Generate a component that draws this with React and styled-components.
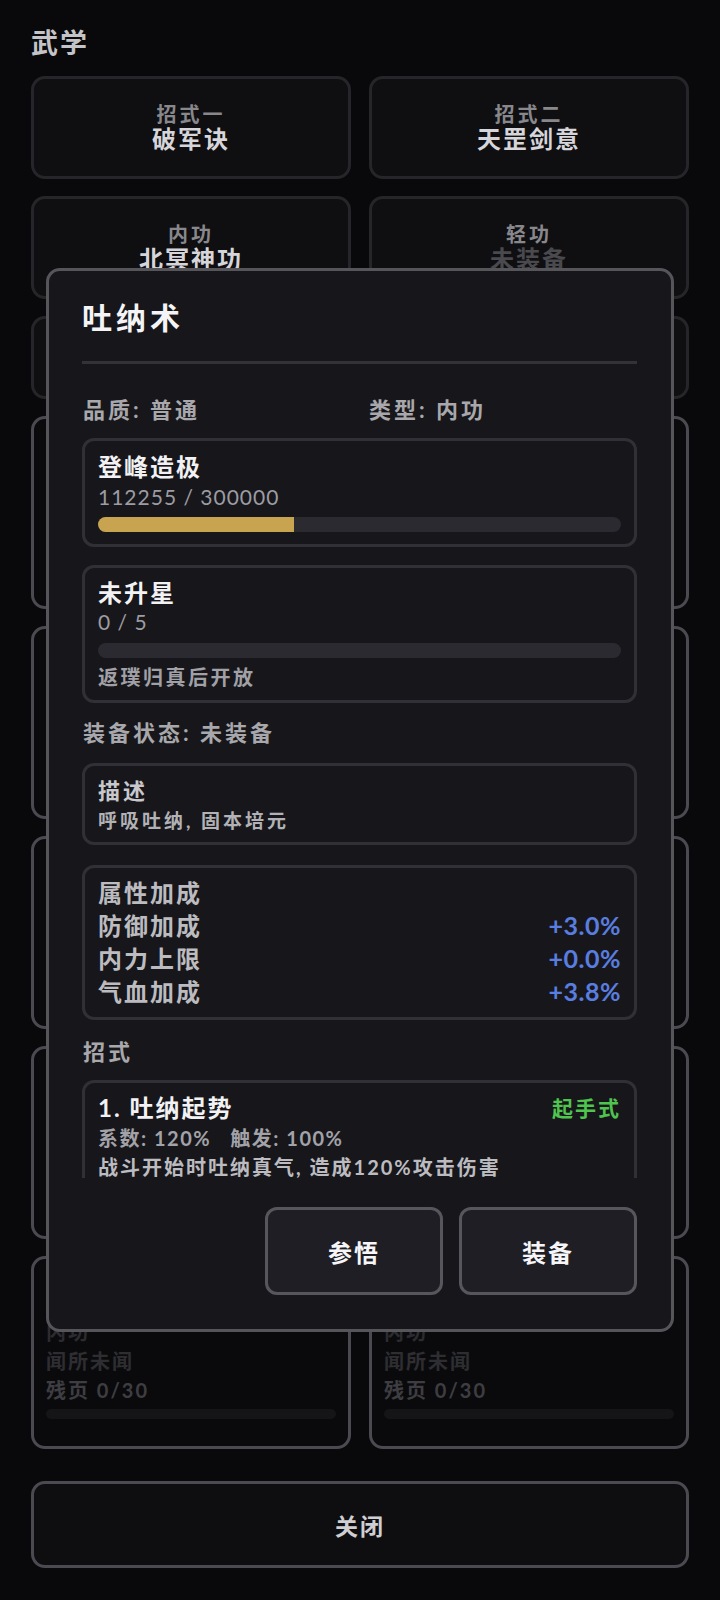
import React from 'react'
import styled, { createGlobalStyle } from 'styled-components'

const GlobalStyle = createGlobalStyle`
  html, body {
    margin: 0;
    padding: 0;
    background: #09090b;
  }
  body {
    font-family: "Lato", "Noto Sans CJK SC", sans-serif;
    color: #d8d8dc;
  }
  * {
    box-sizing: border-box;
  }
`

const Page = styled.div`
  padding: 25px 31px 32px;
  min-height: 1600px;
`

const PageTitle = styled.div`
  font-size: 27px;
  line-height: 36px;
  font-weight: 700;
  color: #c4c4c8;
  letter-spacing: 2px;
  margin-bottom: 15px;
`

const Grid = styled.div`
  display: grid;
  grid-template-columns: 1fr 1fr;
  gap: 17px 18px;
`

const SlotCard = styled.div`
  height: ${p => (p.short ? 83 : 103)}px;
  background: #0f0f12;
  border: 3px solid #26262a;
  border-radius: 14px;
  display: flex;
  flex-direction: column;
  align-items: center;
  justify-content: center;
`

const SlotLabel = styled.div`
  font-size: 20px;
  line-height: 22px;
  font-weight: 700;
  color: #88888c;
  letter-spacing: 3px;
`

const SlotName = styled.div`
  font-size: 24px;
  line-height: 28px;
  font-weight: 700;
  color: ${p => (p.empty ? '#4a4a4e' : '#d6d6da')};
  letter-spacing: 2px;
`

const ListCard = styled.div`
  height: 193px;
  background: #0a0a0c;
  border: 3px solid #4a4a50;
  border-radius: 14px;
  padding: 12px 12px;
  display: flex;
  flex-direction: column;
`

const ListName = styled.div`
  font-size: 22px;
  line-height: 34px;
  font-weight: 700;
  color: #3a3a3e;
  margin-bottom: 13px;
`

const ListLine = styled.div`
  font-size: 20px;
  line-height: 29px;
  font-weight: 700;
  letter-spacing: 2px;
  color: ${p => p.color || '#2e2e32'};
`

const ListBar = styled.div`
  margin-top: 4px;
  height: 10px;
  border-radius: 5px;
  background: #151518;
`

const CloseButton = styled.div`
  margin-top: 32px;
  height: 87px;
  background: #0e0e11;
  border: 3px solid #4a4a50;
  border-radius: 14px;
  display: flex;
  align-items: center;
  justify-content: center;
  font-size: 23px;
  font-weight: 700;
  color: #cfcfd3;
  letter-spacing: 2px;
`

const Overlay = styled.div`
  position: fixed;
  inset: 0;
  display: flex;
  align-items: center;
  justify-content: center;
`

const Modal = styled.div`
  width: 628px;
  background: #17171b;
  border: 3px solid #55555a;
  border-radius: 14px;
  padding: 26px 34px 34px 33px;
  display: flex;
  flex-direction: column;
`

const ModalTitle = styled.div`
  font-size: 30px;
  line-height: 40px;
  font-weight: 700;
  color: #f4f4f6;
  letter-spacing: 4px;
`

const Divider = styled.div`
  margin: 24px 0 16px;
  height: 3px;
  background: #323237;
`

const Scroll = styled.div`
  height: 798px;
  overflow: hidden;
  display: flex;
  flex-direction: column;
`

const InfoRow = styled.div`
  margin-top: 14px;
  display: grid;
  grid-template-columns: 1fr 1fr;
  gap: 18px;
  padding-left: 1px;
  font-size: 22px;
  line-height: 32px;
  font-weight: 700;
  color: #a8a8ac;
  letter-spacing: 3px;
`

const Box = styled.div`
  margin-top: ${p => p.gap || 0}px;
  border: 3px solid #303036;
  border-radius: 12px;
  padding: ${p => p.pad || '10px 13px'};
  flex-shrink: 0;
`

const BoxName = styled.div`
  font-size: 24px;
  line-height: ${p => p.lh || 32}px;
  font-weight: 700;
  color: #f2f2f4;
  letter-spacing: 2px;
`

const BoxValue = styled.div`
  font-size: 21px;
  line-height: 28px;
  color: #9c9ca2;
  letter-spacing: 1px;
`

const Track = styled.div`
  margin-top: ${p => p.gap || 6}px;
  height: 15px;
  border-radius: 8px;
  background: #2a2a30;
  overflow: hidden;
`

const Fill = styled.div`
  height: 100%;
  background: #c9a450;
`

const Note = styled.div`
  margin-top: 6px;
  font-size: 20px;
  line-height: 26px;
  font-weight: 700;
  color: #a0a0a6;
  letter-spacing: 2.5px;
`

const Label = styled.div`
  margin-top: ${p => p.gap || 0}px;
  padding-left: 1px;
  font-size: 22px;
  line-height: ${p => p.lh || 32}px;
  font-weight: 700;
  color: #a8a8ac;
  letter-spacing: 3px;
`

const DescTitle = styled.div`
  font-size: 22px;
  line-height: 30px;
  font-weight: 700;
  color: #c8c8cc;
  letter-spacing: 3px;
`

const DescText = styled.div`
  font-size: 19px;
  line-height: 30px;
  font-weight: 700;
  color: #b2b2b6;
  letter-spacing: 3px;
`

const StatRow = styled.div`
  display: flex;
  justify-content: space-between;
  align-items: center;
  height: 33px;
  line-height: 33px;
  font-size: 24px;
  font-weight: 700;
  letter-spacing: 2px;
  color: #bcbcc0;
`

const StatValue = styled.span`
  font-size: 25px;
  font-weight: 700;
  letter-spacing: 0.5px;
  color: #5a7de0;
`

const MoveHead = styled.div`
  display: flex;
  justify-content: space-between;
  align-items: center;
  height: 30px;
  line-height: 30px;
`

const MoveTag = styled.span`
  font-size: 21px;
  font-weight: 700;
  color: #4fc44f;
  letter-spacing: 2px;
`

const MoveStats = styled.div`
  font-size: 20px;
  line-height: 30px;
  font-weight: 700;
  color: #a2a2a8;
  letter-spacing: 1.5px;
  white-space: pre;
`

const MoveDesc = styled.div`
  font-size: 20px;
  line-height: 28px;
  font-weight: 700;
  color: #bcbcc0;
  letter-spacing: 2px;
  white-space: nowrap;
`

const Actions = styled.div`
  margin-top: 29px;
  display: flex;
  justify-content: flex-end;
  gap: 16px;
`

const ActionButton = styled.div`
  width: 178px;
  height: 88px;
  background: #1e1e24;
  border: 3px solid #56565c;
  border-radius: 12px;
  display: flex;
  align-items: center;
  justify-content: center;
  font-size: 24px;
  font-weight: 700;
  color: #f6f6f8;
  letter-spacing: 2px;
`

const slots = [
  { label: '招式一', name: '破军诀' },
  { label: '招式二', name: '天罡剑意' },
  { label: '内功', name: '北冥神功' },
  { label: '轻功', name: '未装备', empty: true },
  { label: '心法', name: '未装备', empty: true, short: true },
  { label: '身法', name: '未装备', empty: true, short: true },
]

const arts = [
  { name: '破军诀', type: '招式', grade: '绝世' },
  { name: '天罡剑意', type: '招式', grade: '上乘' },
  { name: '北冥神功', type: '内功', grade: '绝世' },
  { name: '吐纳术', type: '内功', grade: '普通' },
  { name: '凌波微步', type: '轻功', grade: '上乘' },
  { name: '金刚诀', type: '内功', grade: '精良' },
  { name: '落英掌', type: '招式', grade: '精良' },
  { name: '梯云纵', type: '轻功', grade: '普通' },
  { name: '易筋经', type: '内功', grade: '闻所未闻' },
  { name: '洗髓经', type: '内功', grade: '闻所未闻' },
]

const stats = [
  { name: '防御加成', value: '+3.0%' },
  { name: '内力上限', value: '+0.0%' },
  { name: '气血加成', value: '+3.8%' },
]

export default function App () {
  const exp = 112255
  const expMax = 300000

  return (
    <>
      <GlobalStyle />
      <Page>
        <PageTitle>武学</PageTitle>
        <Grid>
          {slots.map(s => (
            <SlotCard key={s.label} short={s.short}>
              <SlotLabel>{s.label}</SlotLabel>
              <SlotName empty={s.empty}>{s.name}</SlotName>
            </SlotCard>
          ))}
          {arts.map(a => (
            <ListCard key={a.name}>
              <ListName>{a.name}</ListName>
              <ListLine color="#2c2c30">{a.type}</ListLine>
              <ListLine>{a.grade}</ListLine>
              <ListLine color="#3e3e42">残页 0/30</ListLine>
              <ListBar />
            </ListCard>
          ))}
        </Grid>
        <CloseButton>关闭</CloseButton>
      </Page>

      <Overlay>
        <Modal>
          <ModalTitle>吐纳术</ModalTitle>
          <Divider />
          <Scroll>
            <InfoRow>
              <span>品质: 普通</span>
              <span>类型: 内功</span>
            </InfoRow>

            <Box gap={12} pad="10px 13px 12px">
              <BoxName>登峰造极</BoxName>
              <BoxValue>112255 / 300000</BoxValue>
              <Track>
                <Fill style={{ width: `${(exp / expMax) * 100}%` }} />
              </Track>
            </Box>

            <Box gap={18} pad="10px 13px 10px">
              <BoxName lh={30}>未升星</BoxName>
              <BoxValue>0 / 5</BoxValue>
              <Track gap={7} />
              <Note>返璞归真后开放</Note>
            </Box>

            <Label gap={14}>装备状态: 未装备</Label>

            <Box gap={14} pad="10px 13px 6px">
              <DescTitle>描述</DescTitle>
              <DescText>呼吸吐纳, 固本培元</DescText>
            </Box>

            <Box gap={20} pad="8px 13px 9px">
              <StatRow>属性加成</StatRow>
              {stats.map(s => (
                <StatRow key={s.name}>
                  <span>{s.name}</span>
                  <StatValue>{s.value}</StatValue>
                </StatRow>
              ))}
            </Box>

            <Label gap={17} lh={30}>招式</Label>

            <Box gap={13} pad="10px 13px 10px">
              <MoveHead>
                <BoxName lh={30}>1. 吐纳起势</BoxName>
                <MoveTag>起手式</MoveTag>
              </MoveHead>
              <MoveStats>{'系数: 120%   触发: 100%'}</MoveStats>
              <MoveDesc>战斗开始时吐纳真气, 造成120%攻击伤害</MoveDesc>
            </Box>
          </Scroll>
          <Actions>
            <ActionButton>参悟</ActionButton>
            <ActionButton>装备</ActionButton>
          </Actions>
        </Modal>
      </Overlay>
    </>
  )
}
